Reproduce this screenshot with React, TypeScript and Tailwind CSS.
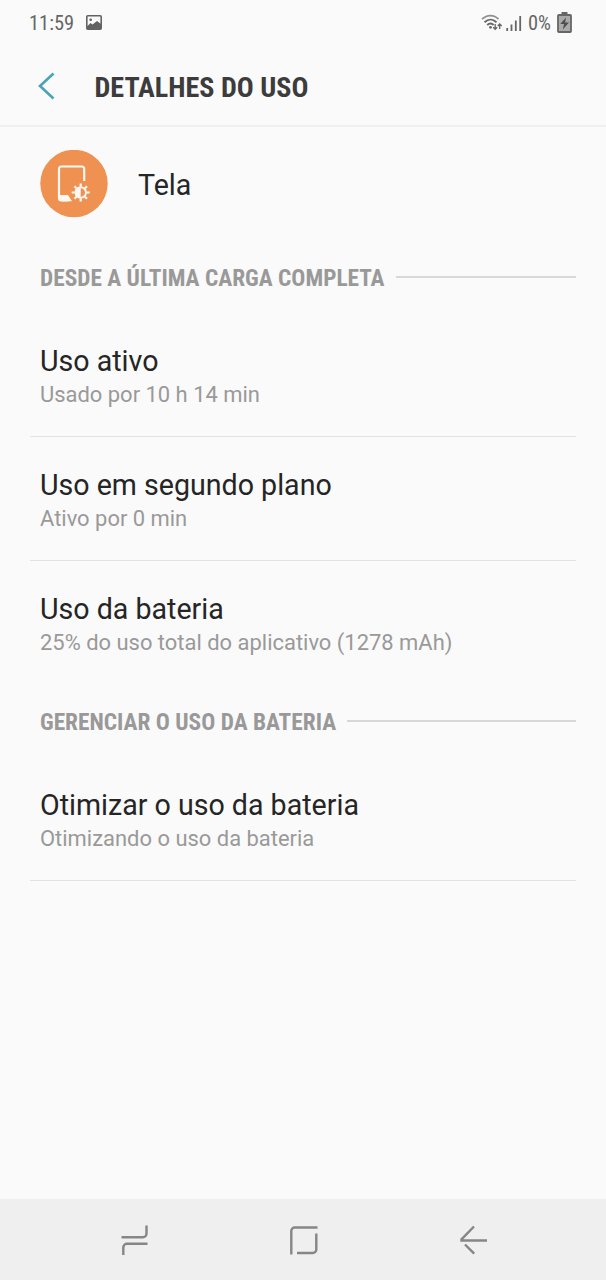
interface UsageItem {
  title: string
  detail: string
}

const sinceCharge: UsageItem[] = [
  { title: 'Uso ativo', detail: 'Usado por 10 h 14 min' },
  { title: 'Uso em segundo plano', detail: 'Ativo por 0 min' },
  { title: 'Uso da bateria', detail: '25% do uso total do aplicativo (1278 mAh)' },
];

const manage: UsageItem[] = [
  { title: 'Otimizar o uso da bateria', detail: 'Otimizando o uso da bateria' },
];

const condensed = "font-['Roboto_Condensed',Roboto,sans-serif] [font-stretch:75%]";

function StatusBar() {
  return (
    <div className={`h-[46px] flex items-center justify-between pl-[29px] pr-[34px] text-[20.4px] text-[#666666] ${condensed}`}>
      <div className="flex items-center gap-[12px]">
        <span className="whitespace-nowrap">11:59</span>
        <svg className="w-4 h-[15px]" viewBox="0 0 16 15" fill="none">
          <rect x="0.8" y="0.8" width="14.4" height="13.4" rx="1" stroke="#626262" strokeWidth="1.6" />
          <path d="M1 11.5 4.5 8l2 1.5L11 6l4 3v5H1z" fill="#626262" />
          <circle cx="4.7" cy="4.7" r="1.3" fill="#626262" />
        </svg>
      </div>
      <div className="flex items-center">
        <svg className="w-[41px] h-[18px]" viewBox="0 0 41 18" fill="none">
          <path d="M1 5.2C6 .4 13 .4 17.5 5.2" stroke="#909090" strokeWidth="1.8" />
          <path d="M3.5 8.2C7.2 4.7 11.8 4.7 15.5 8.2M6.200 11c2-1.800 4.600-1.800 6.400 0" stroke="#666" strokeWidth="1.9" />
          <circle cx="9.5" cy="13.3" r="1.4" fill="#666" />
          <path d="M14.2 10v5M12.2 13.3l2 2 2-2M18.700 15v-5M16.700 12l2-2 2 2" stroke="#666" strokeWidth="1.3" />
          <path d="M26.2 14v3M30.5 10.5V17M34.800 6.500V17M39.200 2v15" stroke="#666" strokeWidth="1.8" />
        </svg>
        <span className="whitespace-nowrap ml-[6px]">0%</span>
        <svg className="w-[15px] h-[21px] ml-[6px]" viewBox="0 0 15 21" fill="none">
          <path d="M4.5 0h6v3h-6z" fill="#666" />
          <rect x="1" y="3" width="13" height="17" rx="0.8" fill="#aaa" stroke="#666" strokeWidth="1.8" />
          <path d="M9 5.5 3.2 12H7l-1.2 5.5L12 10.5H8.2z" fill="#505050" />
        </svg>
      </div>
    </div>
  );
}

function SectionHeader({ label }: { label: string }) {
  return (
    <div className="h-[72px] flex items-center gap-[11px] pl-[40px] pr-[30px]">
      <h2 className={`relative top-[2px] whitespace-nowrap text-[23.35px] font-bold text-[#999999] ${condensed}`}>{label}</h2>
      <div className="flex-1 h-[2px] bg-[#d8d8d8]" />
    </div>
  );
}

function Item({ item, divider }: { item: UsageItem; divider: boolean }) {
  return (
    <div
      className={`h-[124px] mx-[30px] px-[10px] pt-[30px] border-b whitespace-nowrap ${
        divider ? 'border-[#e3e3e3]' : 'border-transparent'
      }`}
    >
      <p className="text-[28.6px] leading-[36px] text-[#252525]">{item.title}</p>
      <p className="text-[21.95px] leading-[32px] text-[#999999]">{item.detail}</p>
    </div>
  );
}

function ScreenIcon() {
  return (
    <svg className="w-[68px] h-[68px]" viewBox="0 0 68 68" fill="none">
      <circle cx="34" cy="33.5" r="33.7" fill="#ef9150" />
      <path d="M44.2 31V19a2.5 2.5 0 0 0-2.5-2.5H21.5a2.500 2.500 0 0 0-2.500 2.500v29a2.500 2.500 0 0 0 2.500 2.500h7" stroke="#fff8f2" strokeWidth="2.2" />
      <path d="M18.5 45h9.500l4 6.300H21.500a3 3 0 0 1-3-2.800z" fill="#fff8f2" />
      <g transform="translate(40.7 42.5)" stroke="#fff8f2" strokeWidth="2.2">
        <circle r="5.3" strokeWidth="1.9" />
        <path d="M0-5A5 5 0 0 0 0 5z" fill="#fff8f2" stroke="none" />
        <path d="M0-6v-3M0 6v3M-6 0h-3M6 0h3M-4.2-4.2l-2.1-2.1M4.2 4.2l2.1 2.1M-4.2 4.2l-2.1 2.1M4.2-4.2l2.1-2.1" />
      </g>
    </svg>
  );
}

function NavBar() {
  return (
    <div className="h-[81px] bg-[#efefef] flex items-center justify-between pl-[120px] pr-[118px]">
      <svg className="w-[30px] h-[32px]" viewBox="0 0 30 32" fill="none" stroke="#868686" strokeWidth="2.4">
        <path d="M1.5 13.2H23a3.5 3.5 0 0 0 3.5-3.5V1.5M27.500 19.800H7a3.700 3.700 0 0 0-3.700 3.500V31" />
      </svg>
      <svg className="w-[30px] h-[30px]" viewBox="0 0 30 30" fill="none" stroke="#868686" strokeWidth="2.4">
        <path d="M2.3 29.5V6a3.5 3.5 0 0 1 3.5-3.5H28.500M27.300 8.500v16a3.500 3.500 0 0 1-3.500 3.500H8" />
      </svg>
      <svg className="w-[30px] h-[30px]" viewBox="0 0 30 30" fill="none" stroke="#868686" strokeWidth="2.4">
        <path d="M16 1.5 3.5 14.3v1.200H29M7 19.500l9.200 9.200" />
      </svg>
    </div>
  );
}

function App() {
  return (
    <div className="w-full h-screen flex flex-col bg-[#fafafa] font-[Roboto,sans-serif] overflow-hidden">
      <StatusBar />
      <header className="h-[81px] flex items-center pl-[38px] border-b-2 border-[#efefef]">
        <svg className="w-[17px] h-[28px]" viewBox="0 0 17 28" fill="none">
          <path d="M15.5 1.5 2 14l13.5 12.5" stroke="#4ba3b9" strokeWidth="2.6" />
        </svg>
        <h1 className={`relative top-[3px] ml-[39.5px] whitespace-nowrap text-[28.1px] font-bold text-[#3c3c3c] ${condensed}`}>DETALHES DO USO</h1>
      </header>
      <main className="flex-1">
        <div className="h-[114px] flex items-center gap-[30px] pl-[40px]">
          <ScreenIcon />
          <span className="relative top-px text-[28.6px] text-[#252525]">Tela</span>
        </div>
        <SectionHeader label="DESDE A ÚLTIMA CARGA COMPLETA" />
        {sinceCharge.map((item, index) => (
          <Item key={item.title} item={item} divider={index < sinceCharge.length - 1} />
        ))}
        <SectionHeader label="GERENCIAR O USO DA BATERIA" />
        {manage.map(item => (
          <Item key={item.title} item={item} divider />
        ))}
      </main>
      <NavBar />
    </div>
  );
}

export default App;
